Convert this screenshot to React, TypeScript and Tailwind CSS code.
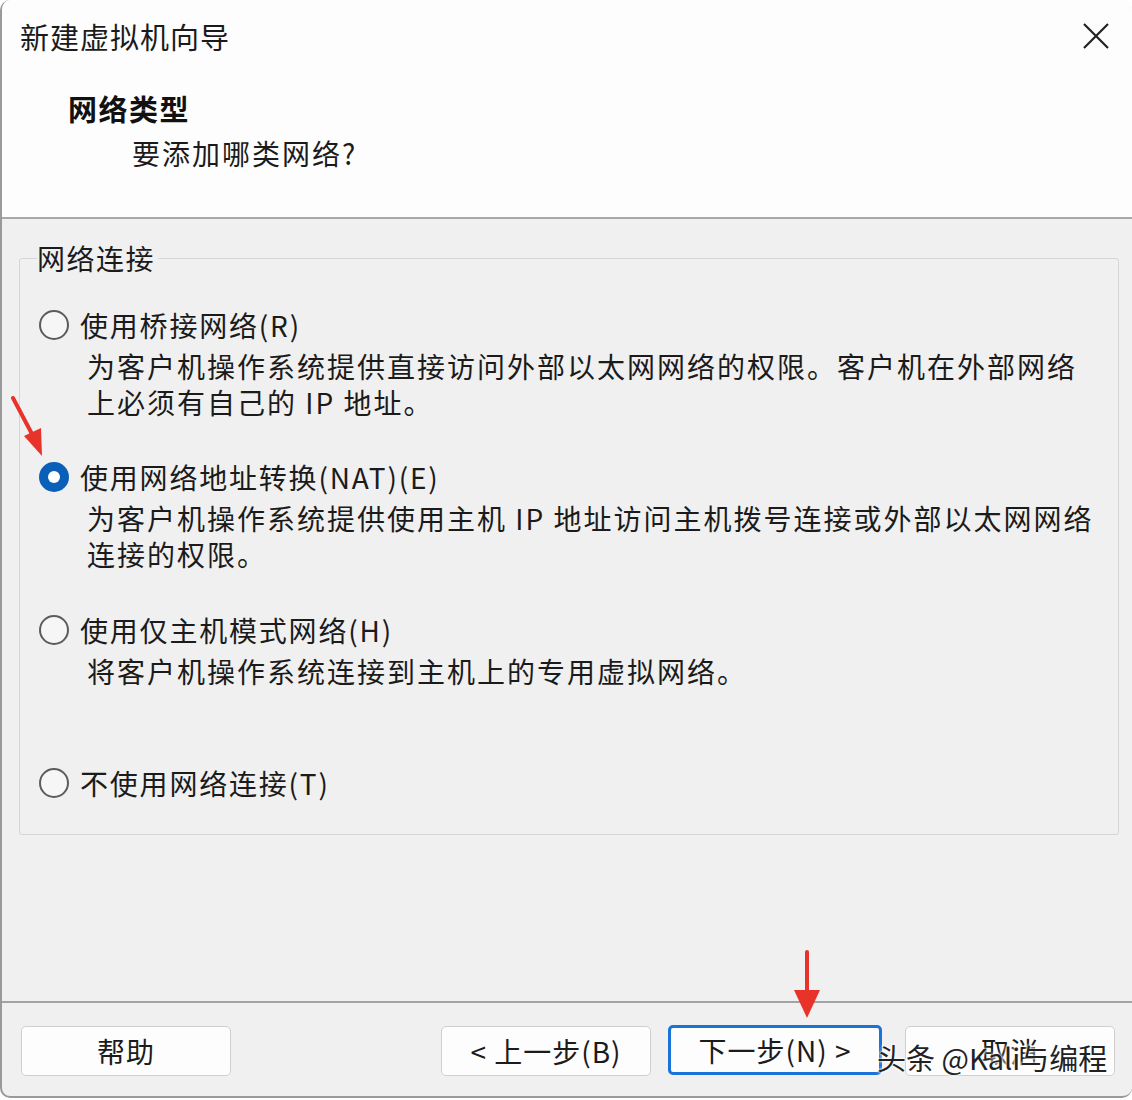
import React from "react";

const FONT = { fontFamily: '"Microsoft YaHei", "Noto Sans CJK SC", "Noto Sans", sans-serif' };

interface OptionProps {
  label: string;
  checked?: boolean;
  lines?: string[];
}

function Radio({ checked }: { checked?: boolean }) {
  if (checked) {
    return (
      <span className="flex h-[30px] w-[30px] shrink-0 items-center justify-center rounded-full bg-[#0a5fb8]">
        <span className="h-[12px] w-[12px] rounded-full bg-white" />
      </span>
    );
  }
  return <span className="block h-[30px] w-[30px] shrink-0 rounded-full border-2 border-[#5c5c5c] bg-[#f6f6f6]" />;
}

function Option({ label, checked, lines }: OptionProps) {
  return (
    <div className="flex flex-col">
      <div className="flex h-[32px] items-center gap-[11px]">
        <Radio checked={checked} />
        <span className="text-[28px] leading-[32px] tracking-[1.8px] text-[#1b1b1b]">{label}</span>
      </div>
      {lines && (
        <div className="mt-[7px] pl-[48px]">
          {lines.map((l) => (
            <div key={l} className="whitespace-nowrap text-[28px] leading-[36px] tracking-[2px] text-[#1b1b1b]">
              {l}
            </div>
          ))}
        </div>
      )}
    </div>
  );
}

function Button({ children, primary, className }: { children: React.ReactNode; primary?: boolean; className?: string }) {
  return (
    <button
      className={
        "flex h-[50px] items-center justify-center rounded-[5px] bg-[#fdfdfd] text-[28px] tracking-[1px] text-[#1b1b1b] " +
        (primary ? "w-[214px] border-[3px] border-[#1a73d9] " : "w-[210px] border border-[#cfcfcf] ") +
        (className ?? "")
      }
    >
      {children}
    </button>
  );
}

export default function App() {
  return (
    <div style={FONT} className="relative h-[1100px] w-[1132px] overflow-hidden bg-white">
      <div className="flex h-[1098px] w-[1132px] flex-col overflow-hidden rounded-[10px] border-b-2 border-l-2 border-[#9a9a9a] bg-[#f0f0f0]">
        {/* header */}
        <div className="relative h-[219px] shrink-0 border-b-2 border-[#a8a8a8] bg-[#fdfdfe]">
          <div className="pl-[18px] pt-[16px] text-[29px] leading-[40px] tracking-[1px] text-[#1b1b1b]">新建虚拟机向导</div>
          <button className="absolute right-[22px] top-[22px] text-[#222]">
            <svg width="28" height="28" viewBox="0 0 28 28" fill="none" stroke="currentColor" strokeWidth="2.2">
              <path d="M2 2 L26 26 M26 2 L2 26" />
            </svg>
          </button>
          <div className="pl-[66px] pt-[32px] text-[29px] font-bold leading-[40px] tracking-[1.5px] text-[#111]">网络类型</div>
          <div className="pl-[130px] pt-[5px] text-[28px] leading-[40px] tracking-[2px] text-[#1b1b1b]">要添加哪类网络?</div>
        </div>

        {/* body */}
        <div className="flex-1 pl-[17px] pr-[13px] pt-[23px]">
          <fieldset className="rounded-[3px] border border-[#d6d6d6] px-[19px] pb-[35px]">
            <legend className="-ml-[2px] px-0 pr-[3px] text-[28px] leading-[32px] tracking-[1.5px] text-[#1b1b1b]">网络连接</legend>
            <div className="flex flex-col pt-[35px]">
              <Option
                label="使用桥接网络(R)"
                lines={["为客户机操作系统提供直接访问外部以太网网络的权限。客户机在外部网络", "上必须有自己的 IP 地址。"]}
              />
              <div className="h-[41px]" />
              <Option
                checked
                label="使用网络地址转换(NAT)(E)"
                lines={["为客户机操作系统提供使用主机 IP 地址访问主机拨号连接或外部以太网网络", "连接的权限。"]}
              />
              <div className="h-[42px]" />
              <Option label="使用仅主机模式网络(H)" lines={["将客户机操作系统连接到主机上的专用虚拟网络。"]} />
              <div className="h-[78px]" />
              <Option label="不使用网络连接(T)" />
            </div>
          </fieldset>
        </div>

        {/* footer */}
        <div className="flex h-[95px] shrink-0 items-start border-t-2 border-[#a3a3a3] pl-[19px] pt-[23px]">
          <Button>帮助</Button>
          <Button className="ml-[210px]">&lt; 上一步(B)</Button>
          <Button primary className="ml-[17px] -mt-[1px]">下一步(N) &gt;</Button>
          <Button className="ml-[23px]">取消</Button>
        </div>
      </div>

      {/* red annotation arrows */}
      <svg className="absolute left-[10px] top-[396px]" width="36" height="62" viewBox="0 0 36 62">
        <path d="M3 2 L22 38" stroke="#e8332a" strokeWidth="4" strokeLinecap="round" />
        <path d="M14 40 L31 32 L32 60 Z" fill="#e8332a" />
      </svg>
      <svg className="absolute left-[791px] top-[950px]" width="32" height="70" viewBox="0 0 32 70">
        <path d="M16 2 L16 42" stroke="#e8332a" strokeWidth="4" strokeLinecap="round" />
        <path d="M3 40 L29 40 L16 68 Z" fill="#e8332a" />
      </svg>

      {/* watermark */}
      <div
        className="absolute left-[877px] top-[1037px] whitespace-nowrap text-[29px] leading-[40px] text-[#222]"
        style={{ textShadow: "0 0 2px #fff, 0 0 3px #fff, 0 0 4px #fff" }}
      >
        头条 @Kali与编程
      </div>
    </div>
  );
}
